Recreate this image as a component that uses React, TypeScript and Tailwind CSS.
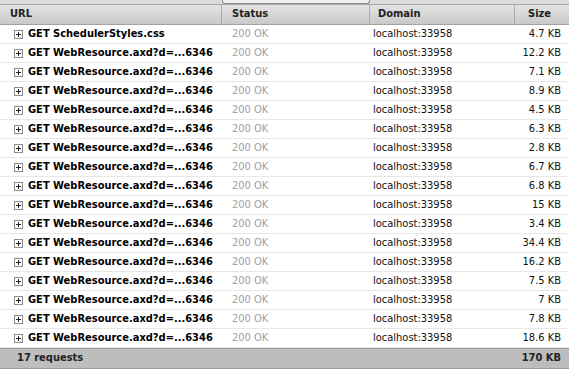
import React from "react";

const sizes = ["4.7 KB","12.2 KB","7.1 KB","8.9 KB","4.5 KB","6.3 KB","2.8 KB","6.7 KB","6.8 KB","15 KB","3.4 KB","34.4 KB","16.2 KB","7.5 KB","7 KB","7.8 KB","18.6 KB"];

function Plus() {
  return (
    <svg width="9" height="9" viewBox="0 0 9 9" className="shrink-0">
      <rect x="0.5" y="0.5" width="8" height="8" fill="#fff" stroke="#8a8a8a" />
      <path d="M2 4.5h5M4.5 2v5" stroke="#222" strokeWidth="1" />
    </svg>
  );
}

export default function App() {
  const rows = sizes.map((s, i) => ({
    url: i === 0 ? "GET SchedulerStyles.css" : "GET WebResource.axd?d=...6346",
    size: s,
  }));
  return (
    <div
      className="w-[569px] h-[392px] bg-white text-[11px] text-black overflow-hidden"
      style={{ fontFamily: '"DejaVu Sans Condensed", "DejaVu Sans", sans-serif', fontStretch: "condensed" }}
    >
      <div className="h-[5px] bg-[#dcdcdc] border-b border-[#a8a8a8] flex">
        <div className="w-[222px]" />
        <div className="w-[148px] bg-[#f0f0f0] border-l border-r border-b border-[#8a8a8a] rounded-b-[3px]" />
      </div>
      <div className="grid grid-cols-[222px_148px_145px_1fr] h-[20px] bg-gradient-to-b from-[#e4e4e4] to-[#c9c9c9] border-b border-[#a3a3a3] font-bold text-[#222]">
        <div className="pl-[10px] flex items-center border-r border-[#a9a9a9]">URL</div>
        <div className="pl-[10px] flex items-center border-r border-[#a9a9a9]">Status</div>
        <div className="pl-[8px] flex items-center border-r border-[#a9a9a9]">Domain</div>
        <div className="pl-[13px] flex items-center">Size</div>
      </div>
      {rows.map((r, i) => (
        <div key={i} className="grid grid-cols-[222px_148px_145px_1fr] h-[19px] border-b border-[#e8e8e8] items-center">
          <div className="pl-[14px] flex items-center gap-[5px] font-bold">
            <Plus />
            <span>{r.url}</span>
          </div>
          <div className="pl-[10px] text-[#a0a0a0]">200 OK</div>
          <div className="pl-[3px] text-[#111]">localhost:33958</div>
          <div className="pr-[8px] text-right text-[#111]">{r.size}</div>
        </div>
      ))}
      <div className="grid grid-cols-[222px_148px_145px_1fr] h-[21px] bg-[#bdbdbd] border-t border-b border-[#9a9a9a] items-center font-bold text-[#222]">
        <div className="pl-[17px]">17 requests</div>
        <div />
        <div />
        <div className="pr-[8px] text-right">170 KB</div>
      </div>
    </div>
  );
}
